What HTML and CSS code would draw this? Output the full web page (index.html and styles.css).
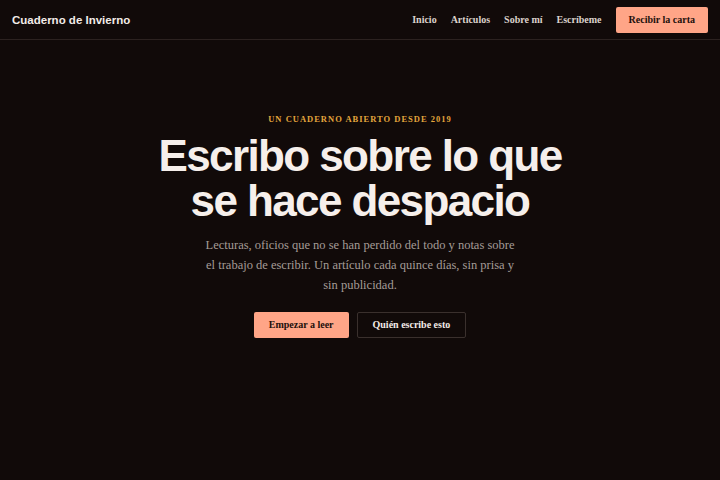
FILE: index.html
```html
<!DOCTYPE html>
<html lang="es">
<head>
  <meta charset="UTF-8">
  <meta name="viewport" content="width=device-width, initial-scale=1.0">
  <title>Cuaderno de Invierno</title>
  <link rel="stylesheet" href="styles.css">
</head>
<body>
  <header class="topbar">
    <a class="brand" href="#">Cuaderno de Invierno</a>
    <nav class="nav">
      <a href="#">Inicio</a>
      <a href="#">Artículos</a>
      <a href="#">Sobre mí</a>
      <a href="#">Escríbeme</a>
      <a class="button primary" href="#">Recibir la carta</a>
    </nav>
  </header>

  <main class="hero">
    <p class="eyebrow">Un cuaderno abierto desde 2019</p>
    <h1>Escribo sobre lo que se hace despacio</h1>
    <p class="lead">Lecturas, oficios que no se han perdido del todo y notas sobre el trabajo de escribir. Un artículo cada quince días, sin prisa y sin publicidad.</p>
    <div class="actions">
      <a class="button primary" href="#">Empezar a leer</a>
      <a class="button ghost" href="#">Quién escribe esto</a>
    </div>
  </main>
</body>
</html>
```

FILE: styles.css
```css
html, body {
  margin: 0;
  padding: 0;
  width: 100%;
  height: 100%;
  background: #110a09;
  color: #f3ece8;
  font-family: 'Liberation Serif', serif;
  overflow: hidden;
}
a {
  color: inherit;
  text-decoration: none;
}
.topbar {
  height: 39px;
  display: flex;
  align-items: center;
  justify-content: space-between;
  padding: 0 12px;
  border-bottom: 1px solid #2c2220;
}
.brand {
  font-family: 'Liberation Sans', sans-serif;
  font-weight: bold;
  font-size: 11.5px;
  color: #f3ece8;
}
.nav {
  display: flex;
  align-items: center;
  gap: 14px;
}
.nav a {
  font-size: 10px;
  font-weight: bold;
  color: #dcd2cc;
}
.button {
  display: inline-block;
  padding: 0 15px;
  height: 26px;
  line-height: 26px;
  border-radius: 2px;
  font-size: 10px;
  font-weight: bold;
  box-sizing: border-box;
}
.nav a.button, .button.primary {
  background: #ffa587;
  color: #1c100c;
}
.nav a.button {
  padding: 0 13px;
}
.button.ghost {
  border: 1px solid #3a302d;
  line-height: 24px;
  padding: 0 15px;
  color: #f3ece8;
}
.hero {
  display: flex;
  flex-direction: column;
  align-items: center;
  text-align: center;
  padding-top: 74px;
}
.eyebrow {
  margin: 0;
  font-size: 8.5px;
  line-height: 10px;
  font-weight: bold;
  letter-spacing: 1px;
  text-transform: uppercase;
  color: #e3a63d;
}
h1 {
  margin: 9px 0 0;
  font-family: 'Liberation Sans', sans-serif;
  font-weight: bold;
  font-size: 44px;
  line-height: 45px;
  letter-spacing: -1.6px;
  width: 440px;
  color: #f6efeb;
}
.lead {
  margin: 12px 0 0;
  width: 316px;
  font-size: 12.5px;
  line-height: 20px;
  color: #a59c97;
}
.actions {
  display: flex;
  gap: 8px;
  margin-top: 17px;
}
```
